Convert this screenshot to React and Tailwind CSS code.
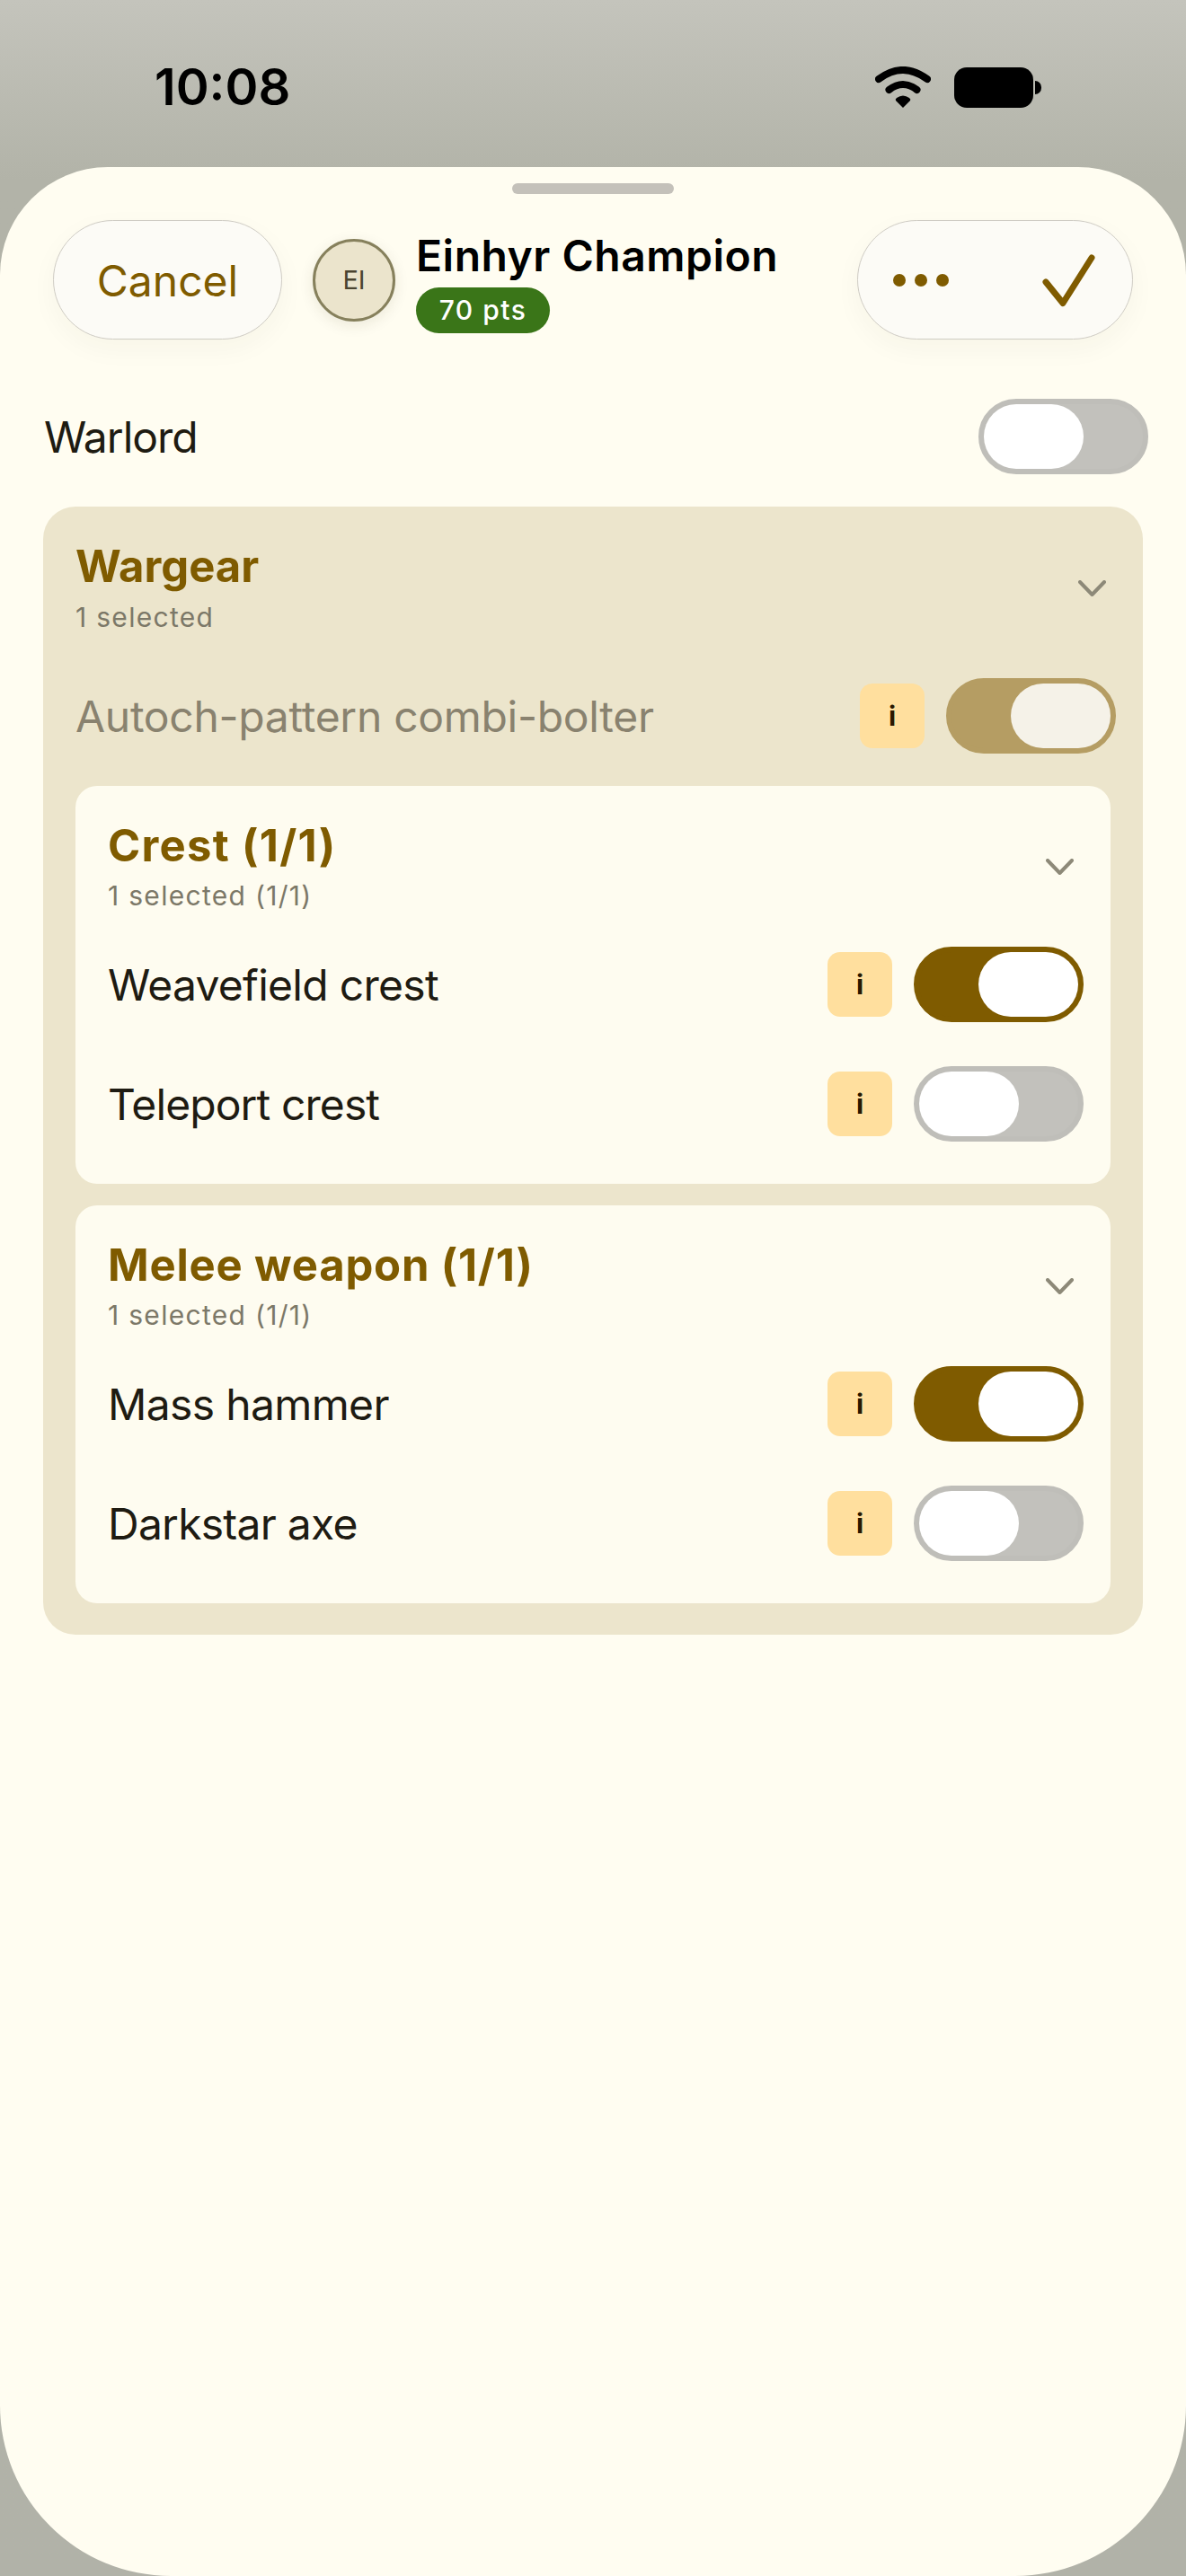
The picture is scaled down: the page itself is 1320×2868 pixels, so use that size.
import React from "react";

const groups = [
  {
    title: "Crest (1/1)",
    titleClass: "tracking-[1.3px]",
    note: "1 selected (1/1)",
    options: [
      { label: "Weavefield crest", on: true, labelClass: "tracking-[-0.7px]" },
      { label: "Teleport crest", on: false, labelClass: "tracking-[-0.9px]" },
    ],
  },
  {
    title: "Melee weapon (1/1)",
    titleClass: "tracking-[0.8px]",
    note: "1 selected (1/1)",
    options: [
      { label: "Mass hammer", on: true, labelClass: "tracking-[-0.65px]" },
      { label: "Darkstar axe", on: false, labelClass: "tracking-[-0.75px]" },
    ],
  },
];

const Toggle = ({ on, muted }) => {
  let tone = "justify-start border-[#bfbeb9] bg-[#c2c1bc]";
  if (on) tone = "justify-end border-[#7f5b00] bg-[#7f5b00]";
  if (muted) tone = "justify-end border-[#b59d63] bg-[#b59d63]";

  return (
    <div className={`flex h-[84px] w-[189px] shrink-0 rounded-full border-[6px] ${tone}`}>
      <div className={`h-[72px] w-[111px] rounded-full ${muted ? "bg-[#f5f2e8]" : "bg-white"}`} />
    </div>
  );
};

const InfoButton = () => (
  <div className="flex h-[72px] w-[72px] shrink-0 items-center justify-center rounded-[14px] bg-[#ffdf9e] text-[30px] font-bold text-[#2a1800]">
    i
  </div>
);

const Chevron = () => (
  <svg width="31" height="18" viewBox="0 0 31 18" fill="none" stroke="#8d8978" strokeWidth="4" strokeLinecap="round" strokeLinejoin="round">
    <path d="M2 2L15.5 16L29 2" />
  </svg>
);

const OptionRow = ({ label, labelClass, on, muted }) => (
  <div className="flex h-[84px] items-center">
    <div className={`flex-1 pt-[2px] text-[48px] leading-[56px] ${labelClass} ${muted ? "text-[#89826f]" : "text-[#1e1b12]"}`}>{label}</div>
    <InfoButton />
    <div className="ml-6">
      <Toggle on={on} muted={muted} />
    </div>
  </div>
);

const GroupHeader = ({ title, titleClass, note, noteGap }) => (
  <div className="flex items-center justify-between pr-[11px]">
    <div>
      <div className={`text-[49px] font-bold leading-[56px] text-[#7f5b00] ${titleClass}`}>{title}</div>
      <div className={`${noteGap} text-[30px] leading-[38px] tracking-[1.3px] text-[#7c7868]`}>{note}</div>
    </div>
    <Chevron />
  </div>
);

export default function App() {
  return (
    <div className="flex h-[2868px] w-[1320px] flex-col bg-[linear-gradient(180deg,#c4c4bc_0px,#b2b3a8_200px,#b1b2a8_100%)] [font-family:Inter,sans-serif]">
      <div className="flex h-[186px] shrink-0 items-start justify-between pl-[172px] pr-[161px] pt-[65px]">
        <div className="text-[56px] font-semibold leading-[64px] text-black">10:08</div>
        <div className="flex items-center pt-[9px]">
          <svg width="62" height="46" viewBox="0 0 62 46" fill="none" stroke="black" strokeWidth="8" strokeLinecap="round">
            <path d="M4 14Q31 -6 58 14" />
            <path d="M15.5 26Q31 14 46.5 26" />
            <path d="M31 46L23 38Q22 36.5 24 35Q31 30 38 35Q40 36.5 39 38Z" fill="black" stroke="none" />
          </svg>
          <div className="ml-[26px] h-[45px] w-[88px] rounded-[14px] bg-black" />
          <div className="ml-[2px] h-[15px] w-[7px] rounded-r-full bg-black" />
        </div>
      </div>

      <div className="flex-1 rounded-t-[120px] rounded-b-[190px] bg-[#fffdf1]">
        <div className="mx-auto mt-[18px] h-3 w-[180px] rounded-full bg-[#c4c1ba]" />

        <div className="mt-[29px] flex items-center px-[59px]">
          <div className="flex h-[133px] w-[255px] shrink-0 items-center justify-center rounded-full border border-[#cfccc4] bg-[#fcfbf6] pt-[2px] text-[48px] text-[#7f5b00] shadow-[0_10px_30px_rgba(60,50,20,0.04)]">
            Cancel
          </div>
          <div className="ml-[34px] flex h-[92px] w-[92px] shrink-0 items-center justify-center rounded-full border-[3px] border-[#86805c] bg-[#ebe4cc] text-[29px] text-[#4a4430] shadow-[0_4px_16px_rgba(60,50,20,0.1)]">
            EI
          </div>
          <div className="ml-[23px] flex-1 pt-[4px]">
            <div className="text-[48px] font-semibold leading-[56px] tracking-[0.5px] text-black">Einhyr Champion</div>
            <div className="mt-[7px] flex h-[51px] w-[149px] items-center justify-center rounded-full bg-[#3a7518] text-[30px] font-medium tracking-[1.5px] text-white">
              70 pts
            </div>
          </div>
          <div className="flex h-[133px] w-[307px] shrink-0 items-center justify-between rounded-full border border-[#cfccc4] bg-[#fcfbf6] pl-[39px] pr-[41px] shadow-[0_10px_30px_rgba(60,50,20,0.04)]">
            <div className="flex gap-[10px]">
              <div className="h-[14px] w-[14px] rounded-full bg-[#7f5b00]" />
              <div className="h-[14px] w-[14px] rounded-full bg-[#7f5b00]" />
              <div className="h-[14px] w-[14px] rounded-full bg-[#7f5b00]" />
            </div>
            <svg width="62" height="60" viewBox="0 0 62 60" fill="none" stroke="#7f5b00" strokeWidth="7" strokeLinecap="round" strokeLinejoin="round">
              <path d="M7 32L26 55.5L58 5" />
            </svg>
          </div>
        </div>

        <div className="mt-[66px] flex items-center pl-[49px] pr-[42px]">
          <div className="flex-1 pt-[2px] text-[48px] leading-[56px] tracking-[-1px] text-[#1e1b12]">Warlord</div>
          <Toggle on={false} />
        </div>

        <div className="mx-12 mt-[36px] rounded-[36px] bg-[#ece5cc] pb-[35px] pl-9 pr-[30px] pt-[39px]">
          <GroupHeader title="Wargear" titleClass="tracking-[0px]" note="1 selected" noteGap="mt-[9px]" />
          <div className="mt-[49px]">
            <OptionRow label="Autoch-pattern combi-bolter" labelClass="tracking-[-0.3px]" on muted />
          </div>

          <div className="mr-[6px] mt-9 flex flex-col gap-6">
            {groups.map((group) => (
              <div key={group.title} className="rounded-[24px] bg-[#fefcf0] pb-[47px] pl-9 pr-[30px] pt-[39px]">
                <GroupHeader title={group.title} titleClass={group.titleClass} note={group.note} noteGap="mt-2" />
                <div className="mt-[38px] flex flex-col gap-[49px]">
                  {group.options.map((option) => (
                    <OptionRow key={option.label} label={option.label} labelClass={option.labelClass} on={option.on} />
                  ))}
                </div>
              </div>
            ))}
          </div>
        </div>
      </div>
    </div>
  );
}
